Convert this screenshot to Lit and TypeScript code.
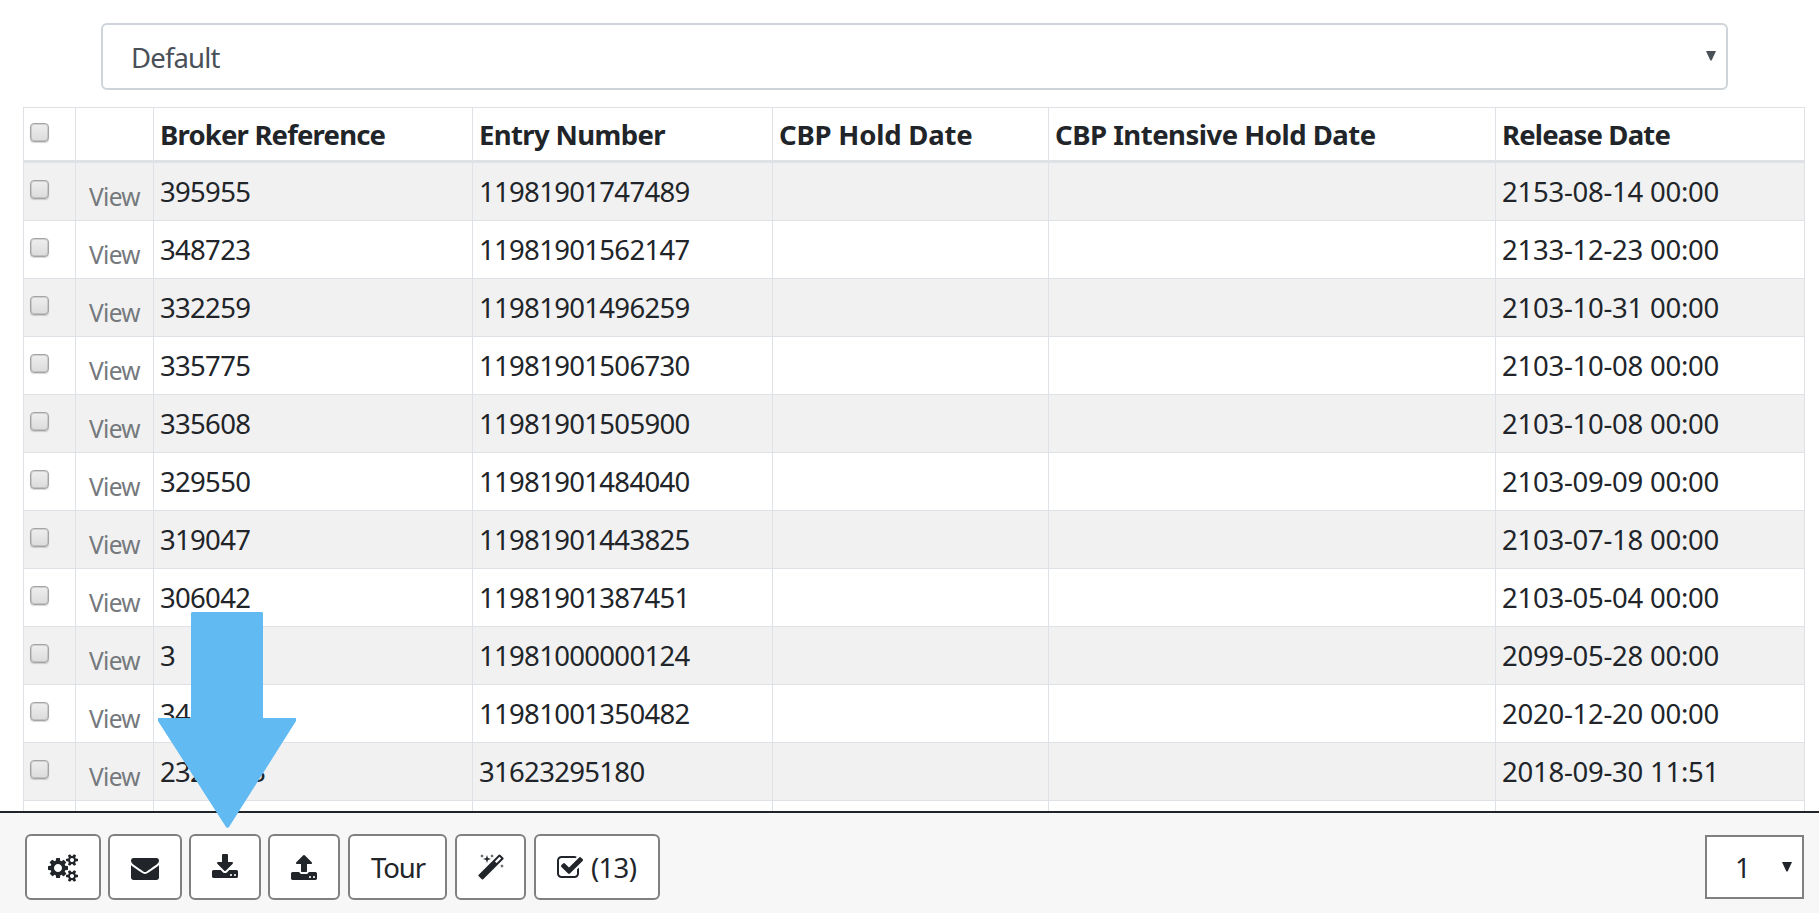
import { LitElement, html, svg, css } from "lit";
import { customElement, property } from "lit/decorators.js";

const ICONS: Record<string, { box: string; width: number; path: string }> = {
  cogs: {
    box: "0 0 1920 1792",
    width: 30,
    path: "M896 896q0-106-75-181t-181-75-181 75-75 181 75 181 181 75 181-75 75-181zm768 512q0-52-38-90t-90-38-90 38-38 90q0 53 37.5 90.5t90.5 37.5 90.5-37.5 37.5-90.5zm0-1024q0-52-38-90t-90-38-90 38-38 90q0 53 37.5 90.5t90.5 37.5 90.5-37.5 37.5-90.5zm-384 421v185q0 10-7 19.5t-16 10.5l-155 24q-11 35-32 76 34 48 90 115 7 11 7 20 0 12-7 19-23 30-82.5 89.5t-78.5 59.5q-11 0-21-7l-115-90q-37 19-77 31-11 108-23 155-7 24-30 24h-186q-11 0-20-7.5t-10-17.5l-23-153q-34-10-75-31l-118 89q-7 7-20 7-11 0-21-8-144-133-144-160 0-9 7-19 10-14 41-53t47-61q-23-44-35-82l-152-24q-10-1-17-9.5t-7-19.5v-185q0-10 7-19.5t16-10.5l155-24q11-35 32-76-34-48-90-115-7-11-7-20 0-12 7-20 22-30 82-89t79-59q11 0 21 7l115 90q34-18 77-32 11-108 23-154 7-24 30-24h186q11 0 20 7.5t10 17.5l23 153q34 10 75 31l118-89q8-7 20-7 11 0 21 8 144 133 144 160 0 8-7 19-12 16-42 54t-45 60q23 48 34 82l152 23q10 2 17 10.5t7 19.5zm640 533v140q0 16-149 31-12 27-30 52 51 113 51 138 0 4-4 7-122 71-124 71-8 0-46-47t-52-68q-20 2-30 2t-30-2q-14 21-52 68t-46 47q-2 0-124-71-4-3-4-7 0-25 51-138-18-25-30-52-149-15-149-31v-140q0-16 149-31 13-29 30-52-51-113-51-138 0-4 4-7 4-2 35-20t59-34 30-16q8 0 46 46.5t52 67.5q20-2 30-2t30 2q51-71 92-112l6-2q4 0 124 70 4 3 4 7 0 25-51 138 17 23 30 52 149 15 149 31zm0-1024v140q0 16-149 31-12 27-30 52 51 113 51 138 0 4-4 7-122 71-124 71-8 0-46-47t-52-68q-20 2-30 2t-30-2q-14 21-52 68t-46 47q-2 0-124-71-4-3-4-7 0-25 51-138-18-25-30-52-149-15-149-31v-140q0-16 149-31 13-29 30-52-51-113-51-138 0-4 4-7 4-2 35-20t59-34 30-16q8 0 46 46.5t52 67.5q20-2 30-2t30 2q51-71 92-112l6-2q4 0 124 70 4 3 4 7 0 25-51 138 17 23 30 52 149 15 149 31z",
  },
  envelope: {
    box: "0 0 1792 1792",
    width: 28,
    path: "M1792 710v794q0 66-47 113t-113 47h-1472q-66 0-113-47t-47-113v-794q44 49 101 87 362 246 497 345 57 42 92.5 65.5t94.5 48 110 24.5h2q51 0 110-24.5t94.5-48 92.5-65.5q170-123 498-345 57-39 100-87zm0-294q0 79-49 151t-122 123q-376 261-468 325-10 7-42.5 31t-54 38.5-52 32.5-57.5 27-50 9h-2q-23 0-50-9t-57.5-27-52-32.5-54-38.5-42.5-31q-91-64-262-182.5t-205-142.5q-62-42-117-115.5t-55-136.5q0-78 41.5-130t118.5-52h1472q65 0 112.5 47t47.5 113z",
  },
  download: {
    box: "64 0 1664 1792",
    width: 26,
    path: "M1344 1344q0-26-19-45t-45-19-45 19-19 45 19 45 45 19 45-19 19-45zm256 0q0-26-19-45t-45-19-45 19-19 45 19 45 45 19 45-19 19-45zm128-224v320q0 40-28 68t-68 28h-1472q-40 0-68-28t-28-68v-320q0-40 28-68t68-28h465l135 136q58 56 136 56t136-56l136-136h464q40 0 68 28t28 68zm-325-569q17 41-14 70l-448 448q-18 19-45 19t-45-19l-448-448q-31-29-14-70 17-39 59-39h256v-448q0-26 19-45t45-19h256q26 0 45 19t19 45v448h256q42 0 59 39z",
  },
  upload: {
    box: "64 0 1664 1792",
    width: 26,
    path: "M1344 1472q0-26-19-45t-45-19-45 19-19 45 19 45 45 19 45-19 19-45zm256 0q0-26-19-45t-45-19-45 19-19 45 19 45 45 19 45-19 19-45zm128-224v320q0 40-28 68t-68 28h-1472q-40 0-68-28t-28-68v-320q0-40 28-68t68-28h427q21 56 70.5 92t110.5 36h256q61 0 110.5-36t70.5-92h427q40 0 68 28t28 68zm-325-648q-17 40-59 40h-256v448q0 26-19 45t-45 19h-256q-26 0-45-19t-19-45v-448h-256q-42 0-59-40-17-39 14-69l448-448q18-19 45-19t45 19l448 448q31 30 14 69z",
  },
  magic: {
    box: "64 0 1664 1792",
    width: 26,
    path: "M1254 581l293-293-107-107-293 293zm447-293q0 27-18 45l-1286 1286q-18 18-45 18t-45-18l-198-198q-18-18-18-45t18-45l1286-1286q18-18 45-18t45 18l198 198q18 18 18 45zm-1351-190l98 30-98 30-30 98-30-98-98-30 98-30 30-98zm350 162l196 60-196 60-60 196-60-196-196-60 196-60 60-196zm930 478l98 30-98 30-30 98-30-98-98-30 98-30 30-98zm-640-640l98 30-98 30-30 98-30-98-98-30 98-30 30-98z",
  },
  check: {
    box: "64 0 1664 1792",
    width: 26,
    path: "M1472 930v318q0 119-84.5 203.5t-203.5 84.5h-832q-119 0-203.5-84.5t-84.5-203.5v-832q0-119 84.5-203.5t203.5-84.5h832q63 0 117 25 15 7 18 23 3 17-9 29l-49 49q-10 10-23 10-3 0-9-2-23-6-45-6h-832q-66 0-113 47t-47 113v832q0 66 47 113t113 47h832q66 0 113-47t47-113v-254q0-13 9-22l64-64q10-10 23-10 6 0 12 3 20 8 20 29zm231-489l-814 814q-24 24-57 24t-57-24l-430-430q-24-24-24-57t24-57l110-110q24-24 57-24t57 24l263 263 647-647q24-24 57-24t57 24l110 110q24 24 24 57t-24 57z",
  },
};

const HEADERS = ["Broker Reference", "Entry Number", "CBP Hold Date", "CBP Intensive Hold Date", "Release Date"];

const ROWS: [string, string, string][] = [
  ["395955", "11981901747489", "2153-08-14 00:00"],
  ["348723", "11981901562147", "2133-12-23 00:00"],
  ["332259", "11981901496259", "2103-10-31 00:00"],
  ["335775", "11981901506730", "2103-10-08 00:00"],
  ["335608", "11981901505900", "2103-10-08 00:00"],
  ["329550", "11981901484040", "2103-09-09 00:00"],
  ["319047", "11981901443825", "2103-07-18 00:00"],
  ["306042", "11981901387451", "2103-05-04 00:00"],
  ["3", "11981000000124", "2099-05-28 00:00"],
  ["34", "11981001350482", "2020-12-20 00:00"],
  ["2323233", "31623295180", "2018-09-30 11:51"],
];

@customElement("fa-icon")
export class FaIcon extends LitElement {
  @property() name = "cogs";
  static styles = css`
    :host { display: block; flex: none; }
    svg { display: block; fill: #212529; }
  `;
  render() {
    const icon = ICONS[this.name];
    return html`<svg width=${icon.width} height="28" viewBox=${icon.box}>${svg`<path d=${icon.path}></path>`}</svg>`;
  }
}

@customElement("app-root")
export class AppRoot extends LitElement {
  static styles = css`
    :host {
      display: flex;
      flex-direction: column;
      position: relative;
      height: 100vh;
      overflow: hidden;
      background: #fff;
      color: #212529;
      font-family: "Noto Sans", "Open Sans", sans-serif;
      font-size: 27.5px;
      letter-spacing: -0.69px;
    }
    * { box-sizing: border-box; }
    .content { flex: 1; min-height: 0; overflow: hidden; padding: 23px 14px 0 23px; }
    .view-select {
      display: flex;
      align-items: center;
      justify-content: space-between;
      height: 67px;
      margin: 0 77px 17px 78px;
      padding: 0 10px 0 28px;
      border: 2px solid #ced4da;
      border-radius: 6px;
      color: #495057;
    }
    .select-label { line-height: 66px; padding-top: 3px; letter-spacing: -0.85px; }
    .caret { display: block; fill: currentColor; }
    .caret-top { margin-top: -1px; }
    .row {
      display: grid;
      grid-template-columns: 52px 78px 319px 300px 276px 447px 310px;
      height: 58px;
      line-height: 57px;
      white-space: nowrap;
    }
    .row:nth-child(even) { background: #f1f1f1; }
    .cell { border-left: 1px solid #dee2e6; border-bottom: 1px solid #dee2e6; padding-left: 6px; }
    .cell:last-child { border-right: 1px solid #dee2e6; }
    .date { letter-spacing: -0.25px; }
    .head { height: 56px; line-height: 51px; font-weight: 700; }
    .head .cell { border-top: 1px solid #dee2e6; border-bottom-width: 3px; padding-top: 1px; }
    .head-0 { letter-spacing: -0.82px; }
    .head-1 { letter-spacing: -0.64px; }
    .head-2 { letter-spacing: -0.2px; }
    .head-3 { letter-spacing: -0.5px; }
    .head-4 { letter-spacing: -0.82px; }
    .view { padding: 10px 0 0 13px; line-height: 47px; font-size: 24.5px; color: #75797d; }
    .check-cell { padding-top: 17px; }
    .head .check-cell { padding-top: 15px; }
    .box {
      width: 19px;
      height: 19px;
      border: 1px solid #a4a4a4;
      border-radius: 4px;
      background: linear-gradient(#eee, #dcdcdc);
      box-shadow: 0 1px 1px rgba(0, 0, 0, 0.16), inset 0 0 0 1px rgba(0, 0, 0, 0.12);
    }
    .footer {
      display: flex;
      justify-content: space-between;
      align-items: flex-start;
      height: 102px;
      padding: 21px 15px 0 25px;
      border-top: 2px solid #212529;
      background: #f7f7f7;
    }
    .tools { display: flex; }
    .btn {
      display: flex;
      align-items: flex-start;
      height: 66px;
      padding: 18px 0 0 21px;
      border: 2px solid #808080;
      border-radius: 6px;
      background: #fff;
      line-height: 45px;
    }
    .w76 { width: 76px; margin-right: 7px; }
    .w74 { width: 74px; margin-right: 7px; }
    .w72 { width: 72px; margin-right: 7px; }
    .upload { width: 72px; margin-right: 8px; }
    .tour { width: 99px; margin-right: 8px; letter-spacing: -1.1px; }
    .wand { width: 71px; margin-right: 8px; padding-left: 20.5px; }
    .selected { width: 126px; }
    .btn-text { margin-top: -9px; }
    .count { margin-left: 8px; }
    .pager {
      display: flex;
      align-items: center;
      justify-content: space-between;
      width: 99px;
      height: 64px;
      margin-top: 1px;
      padding: 0 10px 0 28px;
      border: 2px solid #808080;
      background: #fff;
      line-height: 60px;
    }
    .page { padding-top: 1px; }
    .pointer { position: absolute; left: 158px; top: 612px; fill: #62baf3; }
  `;

  private caret(cls = "") {
    return html`<svg class="caret ${cls}" width="10" height="10" viewBox="0 0 10 10"><path d="M0 0h10L5.6 9.6h-1.2z"></path></svg>`;
  }

  render() {
    return html`
      <div class="content">
        <div class="view-select"><span class="select-label">Default</span>${this.caret("caret-top")}</div>
        <div class="table">
          <div class="row head">
            <div class="cell check-cell"><div class="box"></div></div>
            <div class="cell"></div>
            ${HEADERS.map((h, i) => html`<div class="cell head-${i}">${h}</div>`)}
          </div>
          ${[...ROWS, null].map(
            (r) => html`<div class="row">
              <div class="cell check-cell">${r ? html`<div class="box"></div>` : ""}</div>
              <div class="cell view">${r ? "View" : ""}</div>
              <div class="cell">${r?.[0]}</div>
              <div class="cell">${r?.[1]}</div>
              <div class="cell"></div>
              <div class="cell"></div>
              <div class="cell date">${r?.[2]}</div>
            </div>`
          )}
        </div>
      </div>
      <div class="footer">
        <div class="tools">
          <div class="btn w76"><fa-icon name="cogs"></fa-icon></div>
          <div class="btn w74"><fa-icon name="envelope"></fa-icon></div>
          <div class="btn w72"><fa-icon name="download"></fa-icon></div>
          <div class="btn upload"><fa-icon name="upload"></fa-icon></div>
          <div class="btn tour"><span class="btn-text">Tour</span></div>
          <div class="btn wand"><fa-icon name="magic"></fa-icon></div>
          <div class="btn selected"><fa-icon name="check"></fa-icon><span class="btn-text count">(13)</span></div>
        </div>
        <div class="pager"><span class="page">1</span>${this.caret()}</div>
      </div>
      <svg class="pointer" width="138" height="216" viewBox="0 0 138 216">
        <path d="M34 0h70l1 1v105h33v3L71 215l-1.500 1-1.500-1L0 109v-3h33V1z"></path>
      </svg>
    `;
  }
}
